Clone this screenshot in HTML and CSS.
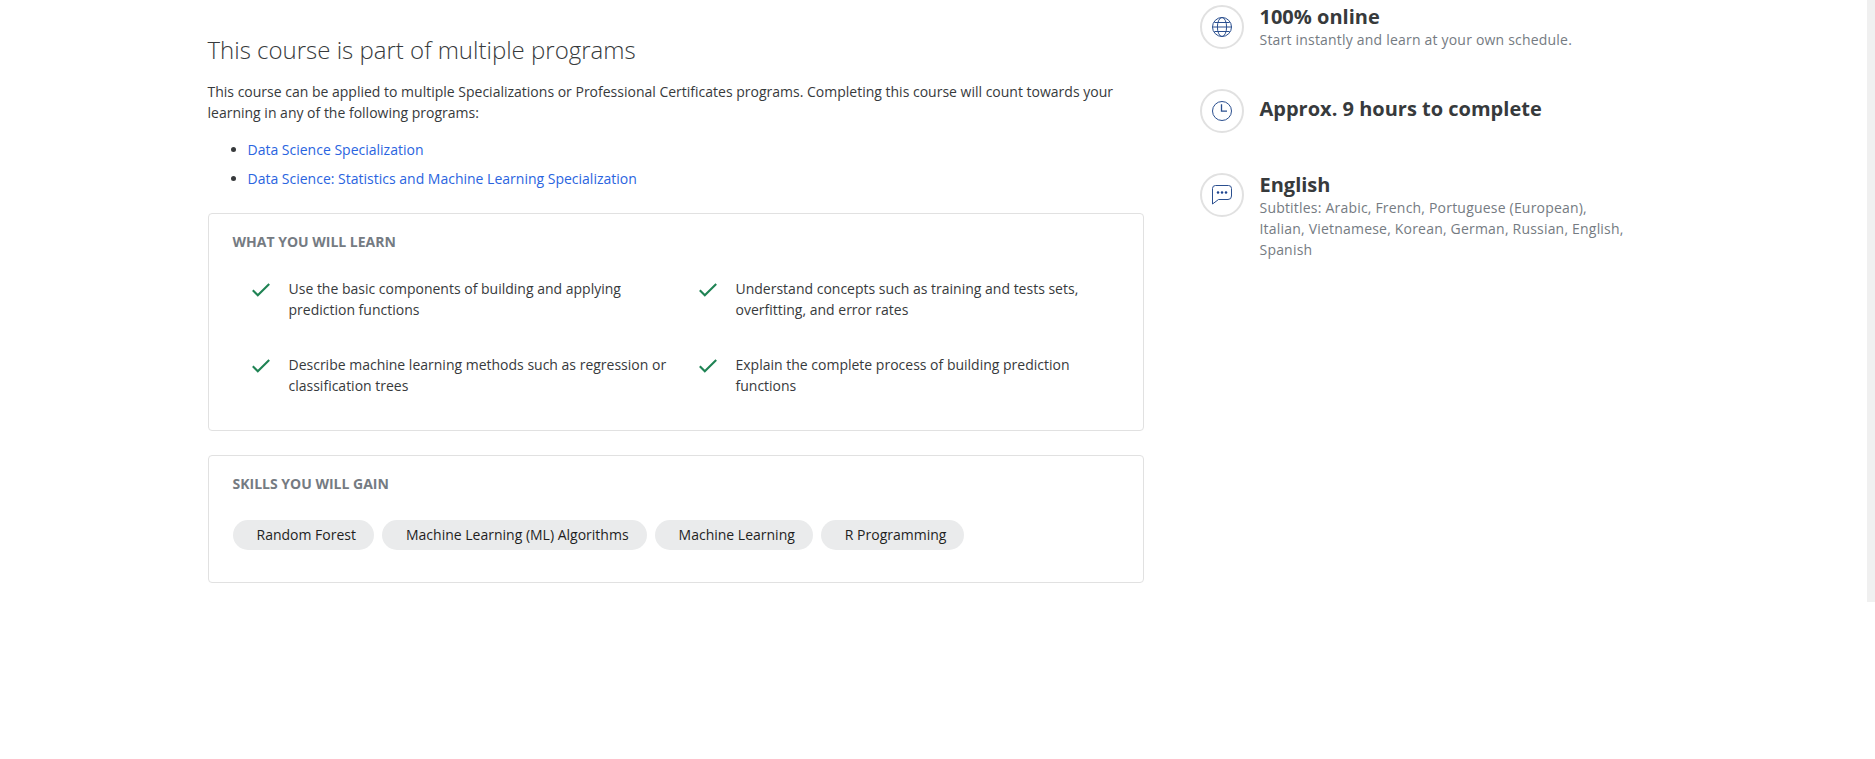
FILE: index.html
```html
<!DOCTYPE html>
<html lang="en">
<head>
<meta charset="utf-8">
<title>Course overview</title>
<link rel="stylesheet" href="styles.css">
</head>
<body>
<svg class="symbols" width="0" height="0" aria-hidden="true">
  <symbol id="check" viewBox="0 0 18 14"><path d="M.8 7.2 5.8 12.2 17.2 1" fill="none" stroke="#1f8354" stroke-width="2.1"/></symbol>
</svg>
<div class="page">
  <main class="main">
    <h2 class="title">This course is part of multiple programs</h2>
    <p class="intro">This course can be applied to multiple Specializations or Professional Certificates programs. Completing this course will count towards your learning in any of the following programs:</p>
    <ul class="programs">
      <li><a href="#">Data Science Specialization</a></li>
      <li><a href="#">Data Science: Statistics and Machine Learning Specialization</a></li>
    </ul>
    <section class="card learn">
      <h3 class="card-title">WHAT YOU WILL LEARN</h3>
      <div class="goals">
        <div class="goal"><svg class="check"><use href="#check"/></svg><p>Use the basic components of building and applying prediction functions</p></div>
        <div class="goal"><svg class="check"><use href="#check"/></svg><p>Understand concepts such as training and tests sets, overfitting, and error rates</p></div>
        <div class="goal"><svg class="check"><use href="#check"/></svg><p>Describe machine learning methods such as regression or classification trees</p></div>
        <div class="goal"><svg class="check"><use href="#check"/></svg><p>Explain the complete process of building prediction functions</p></div>
      </div>
    </section>
    <section class="card skills">
      <h3 class="card-title">SKILLS YOU WILL GAIN</h3>
      <div class="chips">
        <span class="chip">Random Forest</span>
        <span class="chip">Machine Learning (ML) Algorithms</span>
        <span class="chip">Machine Learning</span>
        <span class="chip">R Programming</span>
      </div>
    </section>
  </main>
  <aside class="facts">
    <div class="fact">
      <div class="badge">
        <svg class="icon" viewBox="0 0 20 20"><circle cx="10" cy="10" r="9.5"/><ellipse cx="10" cy="10" rx="4.6" ry="9.5"/><path d="M.5 10h19M2.4 5.5h15.200M2.400 14.500h15.200"/></svg>
      </div>
      <div class="fact-text"><h4>100% online</h4><p>Start instantly and learn at your own schedule.</p></div>
    </div>
    <div class="fact single">
      <div class="badge">
        <svg class="icon" viewBox="0 0 20 20"><circle cx="10" cy="10" r="9.5"/><path class="hands" d="M9.500 3.200V10.100H15"/></svg>
      </div>
      <div class="fact-text"><h4>Approx. 9 hours to complete</h4></div>
    </div>
    <div class="fact">
      <div class="badge">
        <svg class="icon" viewBox="0 0 20 20"><path d="M.5 19V3.500a3 3 0 0 1 3-3h13a3 3 0 0 1 3 3v7.500a3.500 3.500 0 0 1-3.500 3.500H6.500Z"/><g class="dots"><circle cx="6" cy="7.500" r="1.250"/><circle cx="10" cy="7.500" r="1.250"/><circle cx="14" cy="7.500" r="1.250"/></g></svg>
      </div>
      <div class="fact-text"><h4>English</h4><p>Subtitles: Arabic, French, Portuguese (European), Italian, Vietnamese, Korean, German, Russian, English, Spanish</p></div>
    </div>
  </aside>
  <div class="scroll-track"></div>
</div>
</body>
</html>
```
FILE: styles.css
```css
* { box-sizing: border-box; margin: 0; padding: 0; }
body { background: #fff; color: #373a3c; font: 14px/21px "Open Sans", "Noto Sans", sans-serif; overflow: hidden; }
.symbols { display: block; }
.page { display: flex; height: 602px; padding-left: 207.5px; }
.main { width: 936px; padding-top: 33px; }
.title { font-size: 24px; font-weight: 300; line-height: 33px; }
.intro { margin-top: 15px; padding-right: 20px; }
.programs { margin-top: 16px; padding-left: 40px; }
.programs li + li { margin-top: 8px; }
.programs a { color: #2a64e0; text-decoration: none; }
.card { border: 1px solid #e1e1e1; border-radius: 4px; padding: 17px 24px 0; }
.card-title { font-size: 14px; font-weight: 700; line-height: 21px; color: #757b82; }
.learn { height: 218px; margin-top: 24px; }
.skills { height: 128px; margin-top: 24px; }
.goals { display: grid; grid-template-columns: 447px 1fr; row-gap: 34px; margin-top: 26px; }
.goal { display: flex; padding: 0 40px 0 19px; }
.goal:nth-child(odd) { padding-right: 8px; }
.check { flex: none; width: 18px; height: 14px; margin: 5px 19px 0 0; }
.chips { display: flex; gap: 8px; margin-top: 26px; }
.chip { height: 30px; padding: 4px 18px 0 24px; border-radius: 15px; background: #eaebec; color: #1f1f1f; white-space: nowrap; }
.facts { width: 440px; margin-left: 56.5px; padding-top: 5px; }
.fact { display: flex; height: 84px; }
.badge { flex: none; width: 44px; height: 44px; padding: 10px; border: 2px solid #e1e1e1; border-radius: 50%; }
.icon { display: block; width: 20px; height: 20px; fill: none; stroke: #2a4f8f; stroke-width: 1; }
.hands { stroke-width: 1.300; }
.dots { fill: #1c448e; stroke: none; }
.fact-text { width: 370px; margin: -1px 0 0 15.5px; }
.fact-text h4 { font-size: 20px; font-weight: 700; line-height: 25px; }
.fact-text p { color: #757b82; letter-spacing: .2px; }
.single .fact-text { margin-top: 7px; }
.scroll-track { width: 8px; margin-left: auto; background: #f0f0f0; }
```
